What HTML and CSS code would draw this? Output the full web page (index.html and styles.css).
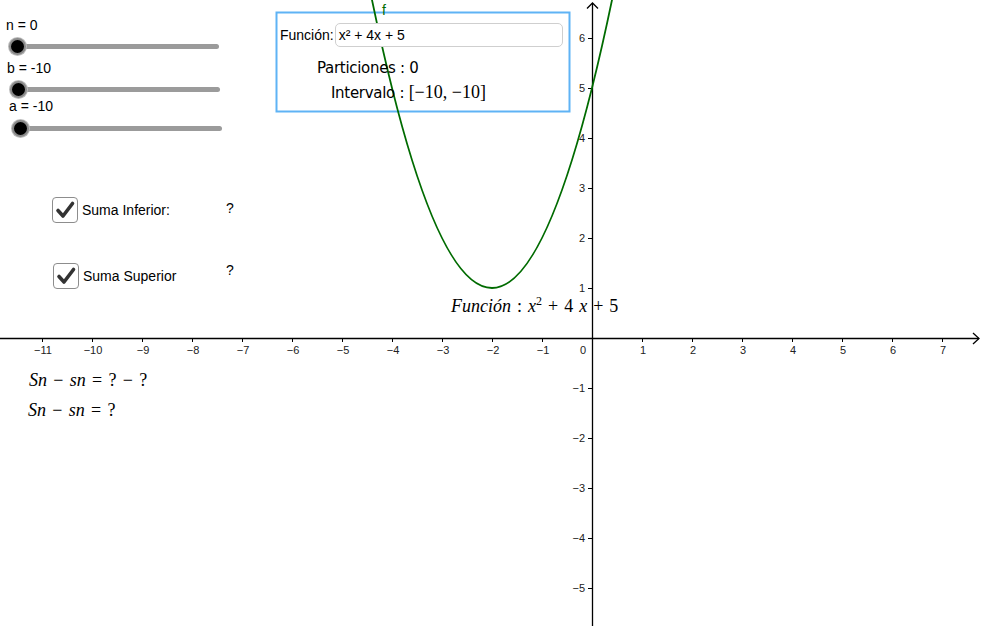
FILE: index.html
```html
<!DOCTYPE html>
<html lang="es">
<head>
<meta charset="utf-8">
<title>GeoGebra - Sumas de Riemann</title>
<link rel="stylesheet" href="styles.css">
</head>
<body>
<div class="canvas">
  <svg class="graph" width="982" height="626" viewBox="0 0 982 626" xmlns="http://www.w3.org/2000/svg">
    <rect class="panel" x="276.5" y="12.5" width="293" height="99"/>
    <g class="axes">
      <line x1="0" y1="338.5" x2="979" y2="338.5"/>
      <polyline points="973,333 979,338.5 973,344" fill="none"/>
      <line x1="592.5" y1="3" x2="592.5" y2="626"/>
      <polyline points="587,8.5 592.5,3 598,8.5" fill="none"/>
      <g class="ticks">
        <line x1="42.5" y1="338" x2="42.5" y2="342"/>
        <line x1="92.5" y1="338" x2="92.5" y2="342"/>
        <line x1="142.5" y1="338" x2="142.5" y2="342"/>
        <line x1="192.5" y1="338" x2="192.5" y2="342"/>
        <line x1="242.5" y1="338" x2="242.5" y2="342"/>
        <line x1="292.5" y1="338" x2="292.5" y2="342"/>
        <line x1="342.5" y1="338" x2="342.5" y2="342"/>
        <line x1="392.5" y1="338" x2="392.5" y2="342"/>
        <line x1="442.5" y1="338" x2="442.5" y2="342"/>
        <line x1="492.5" y1="338" x2="492.5" y2="342"/>
        <line x1="542.5" y1="338" x2="542.5" y2="342"/>
        <line x1="642.5" y1="338" x2="642.5" y2="342"/>
        <line x1="692.5" y1="338" x2="692.5" y2="342"/>
        <line x1="742.5" y1="338" x2="742.5" y2="342"/>
        <line x1="792.5" y1="338" x2="792.5" y2="342"/>
        <line x1="842.5" y1="338" x2="842.5" y2="342"/>
        <line x1="892.5" y1="338" x2="892.5" y2="342"/>
        <line x1="942.5" y1="338" x2="942.5" y2="342"/>
        <line x1="588" y1="38.5" x2="592" y2="38.5"/>
        <line x1="588" y1="88.5" x2="592" y2="88.5"/>
        <line x1="588" y1="138.5" x2="592" y2="138.5"/>
        <line x1="588" y1="188.5" x2="592" y2="188.5"/>
        <line x1="588" y1="238.5" x2="592" y2="238.5"/>
        <line x1="588" y1="288.5" x2="592" y2="288.5"/>
        <line x1="588" y1="388.5" x2="592" y2="388.5"/>
        <line x1="588" y1="438.5" x2="592" y2="438.5"/>
        <line x1="588" y1="488.5" x2="592" y2="488.5"/>
        <line x1="588" y1="538.5" x2="592" y2="538.5"/>
        <line x1="588" y1="588.5" x2="592" y2="588.5"/>
      </g>
    </g>
    <g class="xlabels">
      <text x="43" y="354">−11</text>
      <text x="93" y="354">−10</text>
      <text x="143" y="354">−9</text>
      <text x="193" y="354">−8</text>
      <text x="243" y="354">−7</text>
      <text x="293" y="354">−6</text>
      <text x="343" y="354">−5</text>
      <text x="393" y="354">−4</text>
      <text x="443" y="354">−3</text>
      <text x="493" y="354">−2</text>
      <text x="543" y="354">−1</text>
      <text x="583" y="354">0</text>
      <text x="643" y="354">1</text>
      <text x="693" y="354">2</text>
      <text x="743" y="354">3</text>
      <text x="793" y="354">4</text>
      <text x="843" y="354">5</text>
      <text x="893" y="354">6</text>
      <text x="943" y="354">7</text>
    </g>
    <g class="ylabels">
      <text x="585" y="42">6</text>
      <text x="585" y="92">5</text>
      <text x="585" y="142">4</text>
      <text x="585" y="192">3</text>
      <text x="585" y="242">2</text>
      <text x="585" y="292">1</text>
      <text x="585" y="392">−1</text>
      <text x="585" y="442">−2</text>
      <text x="585" y="492">−3</text>
      <text x="585" y="542">−4</text>
      <text x="585" y="592">−5</text>
    </g>
    <path class="curve" d="M367,-24.5 Q492,600.5 617,-24.5"/>
    <text class="flabel" x="382" y="15">f</text>
  </svg>

  <div class="slider slider-n">
    <span class="slider-label">n = 0</span>
    <div class="track"><span class="thumb"></span></div>
  </div>
  <div class="slider slider-b">
    <span class="slider-label">b = -10</span>
    <div class="track"><span class="thumb"></span></div>
  </div>
  <div class="slider slider-a">
    <span class="slider-label">a = -10</span>
    <div class="track"><span class="thumb"></span></div>
  </div>

  <div class="inputbox">
    <span class="input-caption">Función:</span>
    <div class="input-field">x² + 4x + 5</div>
  </div>

  <div class="latex particiones">Particiones : 0</div>
  <div class="latex intervalo">Intervalo : <span class="mathup">[−10, −10]</span></div>

  <label class="check check-inf">
    <span class="box"><svg width="22" height="22" viewBox="0 0 22 22"><path d="M4 11.5 L9 17 L18.5 4.5" fill="none" stroke="#333" stroke-width="3.6" stroke-linecap="round" stroke-linejoin="round"/></svg></span>
    <span class="check-text">Suma Inferior:</span>
  </label>
  <label class="check check-sup">
    <span class="box"><svg width="22" height="22" viewBox="0 0 22 22"><path d="M4 11.5 L9 17 L18.5 4.5" fill="none" stroke="#333" stroke-width="3.6" stroke-linecap="round" stroke-linejoin="round"/></svg></span>
    <span class="check-text">Suma Superior</span>
  </label>

  <span class="qmark q-inf">?</span>
  <span class="qmark q-sup">?</span>

  <div class="math eq1"><i>Sn</i> − <i>sn</i> = ? − ?</div>
  <div class="math eq2"><i>Sn</i> − <i>sn</i> = ?</div>

  <div class="math funclabel"><i>Función</i> : <i>x</i><sup>2</sup> + 4 <i>x</i> + 5</div>
</div>
</body>
</html>
```

FILE: styles.css
```css
html, body {
  margin: 0;
  padding: 0;
  background: #ffffff;
}

.canvas {
  position: relative;
  width: 982px;
  height: 626px;
  overflow: hidden;
  font-family: "Liberation Sans", Arial, sans-serif;
  color: #000;
}

.graph {
  position: absolute;
  left: 0;
  top: 0;
}

.panel {
  fill: none;
  stroke: #5fb3f5;
  stroke-width: 2;
}

.axes line,
.axes polyline {
  stroke: #000;
  stroke-width: 1.3;
}

.ticks line {
  stroke-width: 1;
}

.xlabels text {
  font-family: "Liberation Sans", Arial, sans-serif;
  font-size: 11px;
  fill: #222;
  text-anchor: middle;
}

.ylabels text {
  font-family: "Liberation Sans", Arial, sans-serif;
  font-size: 11px;
  fill: #222;
  text-anchor: end;
}

.curve {
  fill: none;
  stroke: #006b00;
  stroke-width: 1.8;
}

.flabel {
  font-family: "Liberation Sans", Arial, sans-serif;
  font-size: 14px;
  fill: #006b00;
}

/* sliders */
.slider {
  position: absolute;
  width: 220px;
}
.slider-n { left: 6px; top: 17px; }
.slider-b { left: 7px; top: 60px; }
.slider-a { left: 9px; top: 98px; }

.slider-label {
  display: block;
  font-size: 14px;
  line-height: 16px;
}

.track {
  position: relative;
  margin-top: 11px;
  margin-left: 11px;
  width: 202px;
  height: 5px;
  border-radius: 3px;
  background: #9b9b9b;
}
.slider-b .track { margin-top: 11px; }
.slider-a .track { margin-top: 12px; }

.thumb {
  position: absolute;
  left: -8px;
  top: -6px;
  width: 13px;
  height: 13px;
  border-radius: 50%;
  background: #000;
  border: 2px solid #8a8a8a;
  box-shadow: 0 0 0 1px #bdbdbd;
}

/* input box */
.inputbox {
  position: absolute;
  left: 280px;
  top: 23px;
  display: flex;
  align-items: center;
}
.input-caption {
  font-size: 14px;
}
.input-field {
  margin-left: 1px;
  width: 223px;
  height: 22px;
  padding-left: 3px;
  border: 1px solid #cfcfcf;
  border-radius: 5px;
  background: #fff;
  font-size: 14px;
  line-height: 22px;
}

.latex {
  position: absolute;
  font-family: "DejaVu Sans", sans-serif;
  font-size: 15px;
  line-height: 18px;
  letter-spacing: -0.3px;
}
.particiones { left: 317px; top: 59px; }
.intervalo { left: 331px; top: 83px; }
.mathup {
  font-family: "Liberation Serif", "Times New Roman", serif;
  font-size: 18px;
  letter-spacing: 0;
}

/* checkboxes */
.check {
  position: absolute;
  display: flex;
  align-items: center;
}
.check-inf { left: 52px; top: 197px; }
.check-sup { left: 53px; top: 263px; }

.box {
  width: 24px;
  height: 24px;
  border: 1px solid #8d8d8d;
  border-radius: 4px;
  display: flex;
  align-items: center;
  justify-content: center;
  background: #fff;
}
.check-text {
  margin-left: 4px;
  font-size: 14px;
}

.qmark {
  position: absolute;
  font-size: 14px;
}
.q-inf { left: 226px; top: 200px; }
.q-sup { left: 226px; top: 262px; }

/* math */
.math {
  position: absolute;
  font-family: "Liberation Serif", "Times New Roman", serif;
  font-size: 18px;
  line-height: 20px;
  white-space: nowrap;
  word-spacing: 1.8px;
}
.eq1 { left: 29px; top: 370px; }
.eq2 { left: 28px; top: 400px; }
.funclabel { left: 451px; top: 296px; word-spacing: 1.5px; }
.math sup {
  font-size: 12px;
  vertical-align: 7px;
  line-height: 0;
}
```
